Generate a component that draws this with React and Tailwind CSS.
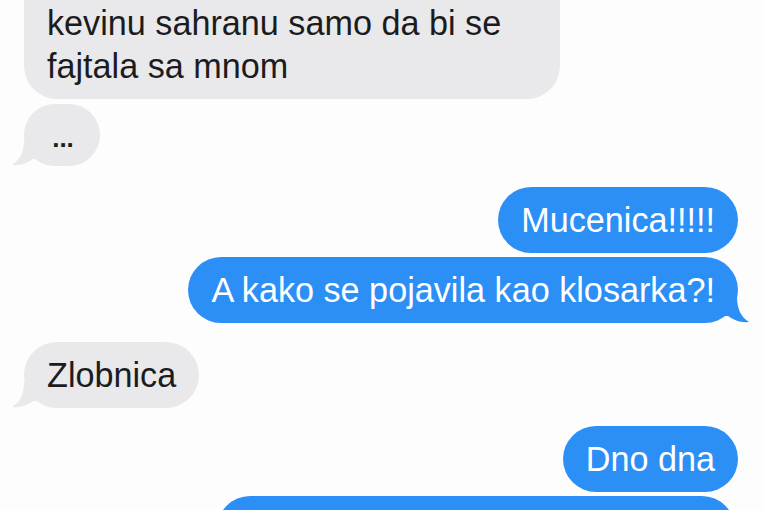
const GrayTail = () => (
  <svg className="absolute left-[-12px] bottom-0" width="32" height="26" viewBox="0 0 32 26">
    <path d="M12 0 C12 12 8 20 0 25 C8 26 15 23 21 19 L32 19 L32 0 Z" fill="#e9e9eb" />
  </svg>
);

const BlueTail = () => (
  <svg className="absolute right-[-11px] bottom-0" width="32" height="26" viewBox="0 0 32 26">
    <path d="M20 0 C20 12 24 20 32 25 C24 26 17 23 11 19 L0 19 L0 0 Z" fill="#2b8ff6" />
  </svg>
);

const Received = ({ children, className = "", tail = false }) => (
  <div className={`relative self-start ${className}`}>
    {tail && <GrayTail />}
    <div className="relative rounded-[33px] bg-[#e9e9eb] px-[23px] py-[11.5px] text-[#1c1c1e]">{children}</div>
  </div>
);

const Sent = ({ children, className = "", tail = false }) => (
  <div className={`relative self-end ${className}`}>
    {tail && <BlueTail />}
    <div className="relative rounded-[33px] bg-[#2b8ff6] px-[23px] py-[11.5px] text-white">{children}</div>
  </div>
);

export default function App() {
  return (
    <div className="h-[510px] w-[765px] overflow-hidden bg-[#fdfdfd] font-['Liberation_Sans',Arial,sans-serif] text-[34.2px] leading-[43px]">
      <div className="-mt-[53px] flex flex-col pl-[24px] pr-[27px]">
        <Received className="w-[536px]">
          Zamisli, ona je dosla i na
          <br />
          kevinu sahranu samo da bi se
          <br />
          fajtala sa mnom
        </Received>

        <div className="relative mt-[5px] self-start">
          <GrayTail />
          <div className="relative flex h-[62px] w-[76px] items-end justify-center rounded-[31px] bg-[#e9e9eb] pb-[15px] pl-[2px] text-[26px] font-bold leading-none text-[#1c1c1e]">
            ...
          </div>
        </div>

        <Sent className="mt-[21px]">Mucenica!!!!!</Sent>
        <Sent className="mt-[4px]" tail>
          A kako se pojavila kao klosarka?!
        </Sent>

        <Received className="mt-[19px]" tail>
          Zlobnica
        </Received>

        <Sent className="mt-[18px]">Dno dna</Sent>
        <Sent className="mt-[4px] mr-[3px] w-[518px]">Nije imala ni trunku stida</Sent>
      </div>
    </div>
  );
}
